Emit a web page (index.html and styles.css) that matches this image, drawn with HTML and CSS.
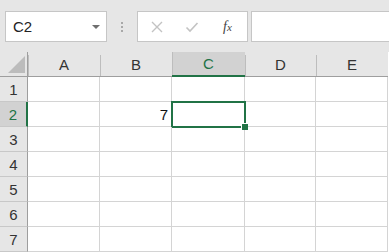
FILE: index.html
```html
<!DOCTYPE html>
<html>
<head>
<meta charset="utf-8">
<link rel="stylesheet" href="styles.css">
</head>
<body>
<div class="app">
  <div class="toolbar">
    <div class="namebox">
      <span class="name">C2</span>
      <span class="dd"></span>
    </div>
    <div class="grip"><i></i><i></i><i></i></div>
    <div class="fbuttons">
      <svg class="ico" width="14" height="14" viewBox="0 0 14 14"><path d="M2 2 L12 12 M12 2 L2 12" stroke="#c3c3c3" stroke-width="1.4" fill="none"/></svg>
      <svg class="ico" width="14" height="14" viewBox="0 0 14 14"><path d="M1.5 7.5 L5 11 L12.5 3" stroke="#c3c3c3" stroke-width="1.6" fill="none"/></svg>
      <span class="fx"><i>f</i><span class="x">x</span></span>
    </div>
    <div class="finput"></div>
  </div>
  <div class="sheet">
    <div class="hd corner"><span class="tri"></span></div>
    <div class="hd col">A</div>
    <div class="hd col">B</div>
    <div class="hd col sel">C</div>
    <div class="hd col">D</div>
    <div class="hd col">E</div>

    <div class="rh">1</div><div class="c"></div><div class="c"></div><div class="c"></div><div class="c"></div><div class="c"></div>
    <div class="rh sel">2</div><div class="c"></div><div class="c num">7</div><div class="c active"><span class="handle"></span></div><div class="c"></div><div class="c"></div>
    <div class="rh">3</div><div class="c"></div><div class="c"></div><div class="c"></div><div class="c"></div><div class="c"></div>
    <div class="rh">4</div><div class="c"></div><div class="c"></div><div class="c"></div><div class="c"></div><div class="c"></div>
    <div class="rh">5</div><div class="c"></div><div class="c"></div><div class="c"></div><div class="c"></div><div class="c"></div>
    <div class="rh">6</div><div class="c"></div><div class="c"></div><div class="c"></div><div class="c"></div><div class="c"></div>
    <div class="rh">7</div><div class="c"></div><div class="c"></div><div class="c"></div><div class="c"></div><div class="c"></div>
  </div>
</div>
</body>
</html>
```
FILE: styles.css
```css
* { box-sizing: border-box; }
html, body { margin: 0; padding: 0; }
body {
  width: 389px;
  height: 252px;
  overflow: hidden;
  background: #e6e6e6;
  font-family: "Open Sans", "Liberation Sans", sans-serif;
}
.app { display: flex; flex-direction: column; }
.toolbar {
  height: 52px;
  display: flex;
  align-items: flex-start;
  padding-top: 11px;
  padding-left: 5px;
}
.namebox {
  width: 102px;
  height: 31px;
  background: #fff;
  border: 1px solid #c6c6c6;
  display: flex;
  align-items: center;
  justify-content: space-between;
  padding: 0 6px 0 7px;
}
.name { font-size: 15px; color: #222; font-family: "Liberation Sans", sans-serif; }
.dd {
  width: 0; height: 0;
  border-left: 4px solid transparent;
  border-right: 4px solid transparent;
  border-top: 4px solid #6f6f6f;
}
.grip {
  width: 30px;
  height: 31px;
  display: flex;
  flex-direction: column;
  align-items: center;
  justify-content: center;
  gap: 2px;
}
.grip i { display: block; width: 2px; height: 2px; background: #a8a8a8; }
.fbuttons {
  width: 111px;
  height: 31px;
  background: #fff;
  border: 1px solid #c6c6c6;
  display: flex;
  align-items: center;
  padding-left: 12px;
  gap: 21px;
}
.fx {
  font-family: "Liberation Serif", serif;
  font-size: 14px;
  color: #444;
  margin-left: 3px;
}
.fx i { font-style: italic; }
.fx .x { font-style: italic; font-size: 11px; }
.finput {
  margin-left: 3px;
  flex: 1;
  height: 31px;
  background: #fff;
  border: 1px solid #c6c6c6;
  border-right: none;
}
.sheet {
  display: grid;
  grid-template-columns: 28px 72px 72px 73px 71px 72px;
  grid-template-rows: 25px repeat(7, 25px);
  background: #fff;
  font-family: "Liberation Sans", sans-serif;
  font-size: 15px;
}
.hd {
  background: #e6e6e6;
  border-bottom: 1px solid #9e9e9e;
  display: flex;
  align-items: center;
  justify-content: center;
  color: #333;
  position: relative;
}
.hd.col::before {
  content: "";
  position: absolute;
  left: 0; top: 3px; bottom: 0;
  width: 1px;
  background: #bdbdbd;
}
.hd.col.sel::before { top: 0; }
.corner { border-right: 1px solid #9e9e9e; position: relative; }
.tri {
  position: absolute;
  right: 2px;
  bottom: 3px;
  width: 0; height: 0;
  border-left: 17px solid transparent;
  border-bottom: 17px solid #bcbcbc;
}
.hd.sel {
  background: #d2d2d2;
  color: #217346;
  border-bottom: 2px solid #217346;
}
.rh {
  background: #e6e6e6;
  border-right: 1px solid #9e9e9e;
  border-bottom: 1px solid #c8c8c8;
  display: flex;
  align-items: center;
  justify-content: center;
  color: #333;
}
.rh.sel {
  background: #d2d2d2;
  color: #217346;
  border-right: 2px solid #217346;
}
.c {
  border-right: 1px solid #d4d4d4;
  border-bottom: 1px solid #d4d4d4;
  position: relative;
}
.num {
  display: flex;
  align-items: center;
  justify-content: flex-end;
  padding-right: 3px;
  color: #111;
}
.active::after {
  content: "";
  position: absolute;
  left: -1px; top: -1px; right: -2px; bottom: -2px;
  border: 2px solid #217346;
}
.handle {
  position: absolute;
  right: -4px;
  bottom: -4px;
  width: 7px;
  height: 7px;
  background: #217346;
  border-left: 1px solid #fff;
  border-top: 1px solid #fff;
  z-index: 2;
}
```
